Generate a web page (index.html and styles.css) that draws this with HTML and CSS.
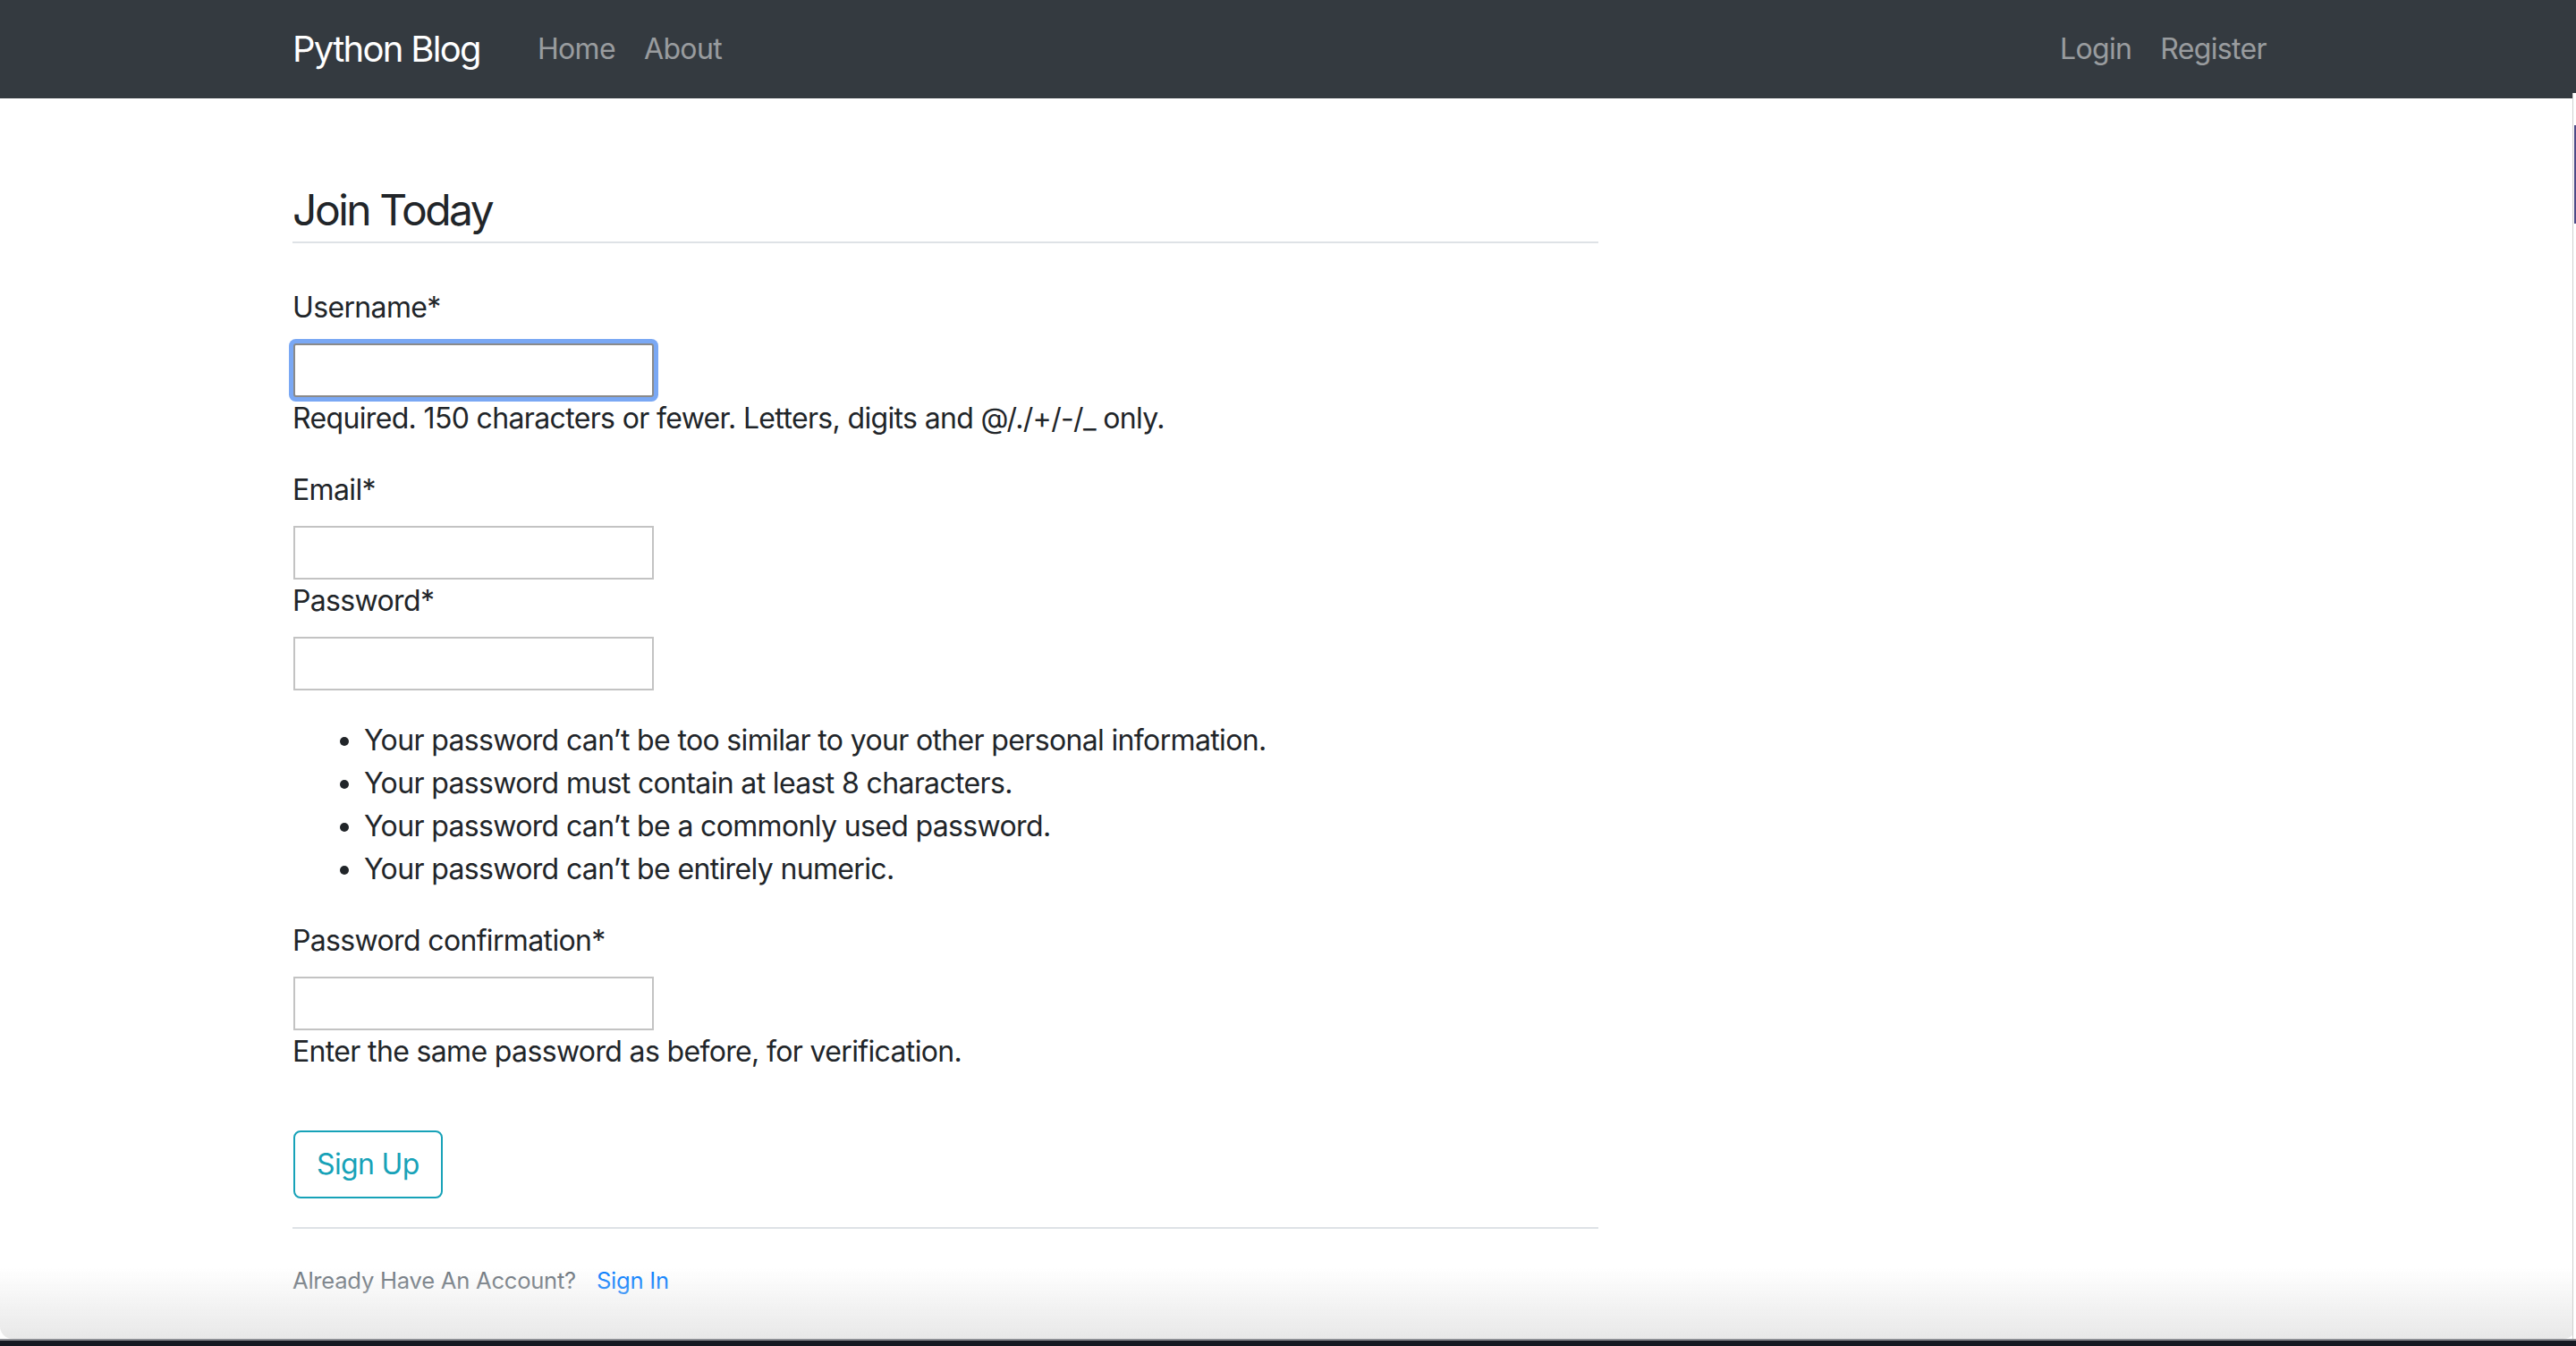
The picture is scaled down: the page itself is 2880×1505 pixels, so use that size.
FILE: index.html
```html
<!DOCTYPE html>
<html lang="en">
<head>
<meta charset="utf-8">
<title>Python Blog</title>
<link rel="stylesheet" href="styles.css">
</head>
<body>
<header class="site-header">
  <nav class="navbar">
    <div class="nav-container">
      <a class="navbar-brand" href="#">Python Blog</a>
      <div class="nav-group">
        <a class="nav-link" href="#">Home</a>
        <a class="nav-link" href="#">About</a>
      </div>
      <div class="nav-group nav-right">
        <a class="nav-link" href="#">Login</a>
        <a class="nav-link" href="#">Register</a>
      </div>
    </div>
  </nav>
</header>
<main class="container">
  <div class="content-col">
    <form class="signup-form">
      <fieldset class="form-fieldset">
        <legend class="form-title">Join Today</legend>
        <div class="field field-gap">
          <label class="field-label" for="id_username">Username*</label>
          <input class="field-input is-focused" type="text" id="id_username">
          <p class="help-text">Required. 150 characters or fewer. Letters, digits and @/./+/-/_ only.</p>
        </div>
        <div class="field">
          <label class="field-label" for="id_email">Email*</label>
          <input class="field-input" type="email" id="id_email">
        </div>
        <div class="field">
          <label class="field-label" for="id_password1">Password*</label>
          <input class="field-input" type="password" id="id_password1">
          <ul class="help-list">
            <li>Your password can’t be too similar to your other personal information.</li>
            <li>Your password must contain at least 8 characters.</li>
            <li>Your password can’t be a commonly used password.</li>
            <li>Your password can’t be entirely numeric.</li>
          </ul>
        </div>
        <div class="field field-gap">
          <label class="field-label" for="id_password2">Password confirmation*</label>
          <input class="field-input" type="password" id="id_password2">
          <p class="help-text">Enter the same password as before, for verification.</p>
        </div>
      </fieldset>
      <div class="form-actions">
        <button class="btn-outline-info" type="button">Sign Up</button>
      </div>
    </form>
    <div class="signin-row">
      <small class="text-muted">Already Have An Account? <a class="signin-link" href="#">Sign In</a></small>
    </div>
  </div>
</main>
<div class="window-shade"></div>
<div class="window-edge"></div>
<div class="scroll-edge"><div class="scroll-thumb"></div></div>
</body>
</html>
```
FILE: styles.css
```css
* { box-sizing: border-box; }

html, body {
  margin: 0;
  padding: 0;
}

body {
  font-family: Inter, "Noto Sans", "Liberation Sans", sans-serif;
  font-size: 32px;
  line-height: 48px;
  letter-spacing: -0.65px;
  color: #212529;
  background: #fff;
  height: 1505px;
  overflow: hidden;
}

a { text-decoration: none; }

/* ---------- navbar ---------- */
.navbar {
  background: #343a40;
  height: 110px;
}

.nav-container {
  max-width: 2280px;
  margin: 0 auto;
  padding: 0 30px 0 27px;
  height: 100%;
  display: flex;
  align-items: center;
}

.navbar-brand {
  color: #fff;
  font-size: 40px;
  line-height: 60px;
  letter-spacing: -1.7px;
  margin-right: 48px;
}

.nav-group {
  display: flex;
}

.nav-right {
  margin-left: auto;
}

.nav-link {
  color: rgba(255, 255, 255, 0.5);
  padding: 16px 16px;
  font-size: 32px;
  line-height: 48px;
  letter-spacing: -0.65px;
}

/* ---------- content ---------- */
.container {
  max-width: 2280px;
  margin: 0 auto;
  padding: 96px 30px 0 27px;
}

.content-col {
  width: 1460px;
}

.form-fieldset {
  border: 0;
  margin: 0 0 32px;
  padding: 0;
  min-width: 0;
}

.form-title {
  display: block;
  width: 100%;
  padding: 0 0 6px;
  margin: 0 0 48px;
  font-size: 48px;
  line-height: 57.6px;
  letter-spacing: -2.5px;
  font-weight: 400;
  border-bottom: 2px solid #dee2e6;
}

.field-gap {
  margin-bottom: 32px;
}

.field-label {
  display: block;
  margin-bottom: 16px;
}

.field-input {
  display: block;
  width: 403px;
  height: 60px;
  margin: 0 0 0 1px;
  padding: 2px 4px;
  border: 2px solid #c3c3c3;
  border-radius: 0;
  background: #fff;
  font: inherit;
}

.field-input.is-focused {
  border-color: #8a8a8a;
  border-radius: 3px;
  box-shadow: 0 0 0 5px #7aa8f4;
  outline: none;
}

.help-text {
  margin: 0;
}

.help-list {
  margin: 32px 0 32px;
  padding-left: 80px;
}

.form-actions {
  margin-bottom: 32px;
}

.btn-outline-info {
  font: inherit;
  font-size: 32px;
  line-height: 48px;
  letter-spacing: -0.65px;
  padding: 12px 24px;
  margin-left: 1px;
  color: #17a2b8;
  background: transparent;
  border: 2px solid #17a2b8;
  border-radius: 8px;
}

.signin-row {
  border-top: 2px solid #dee2e6;
  padding-top: 32px;
}

.text-muted {
  color: #6c757d;
  font-size: 25.6px;
  letter-spacing: -0.25px;
}

.signin-link {
  color: #007bff;
  margin-left: 16px;
}

/* ---------- window frame decoration ---------- */
.window-shade {
  position: fixed;
  left: 0;
  right: 0;
  bottom: 8px;
  height: 80px;
  background: linear-gradient(to bottom, rgba(240, 240, 240, 0), rgba(228, 228, 228, 0.85));
  border-radius: 0 0 14px 14px;
  pointer-events: none;
}

.window-edge {
  position: fixed;
  left: 0;
  right: 0;
  bottom: 0;
  height: 8px;
  background: #151922;
  border-top: 2px solid #8d8f94;
}

.scroll-edge {
  position: fixed;
  top: 104px;
  right: 0;
  width: 4px;
  bottom: 8px;
  border-left: 1px solid #cfcfcf;
  background: #fff;
}

.scroll-thumb {
  margin-top: 36px;
  margin-left: 1px;
  height: 110px;
  background: #4d4b86;
}
```
